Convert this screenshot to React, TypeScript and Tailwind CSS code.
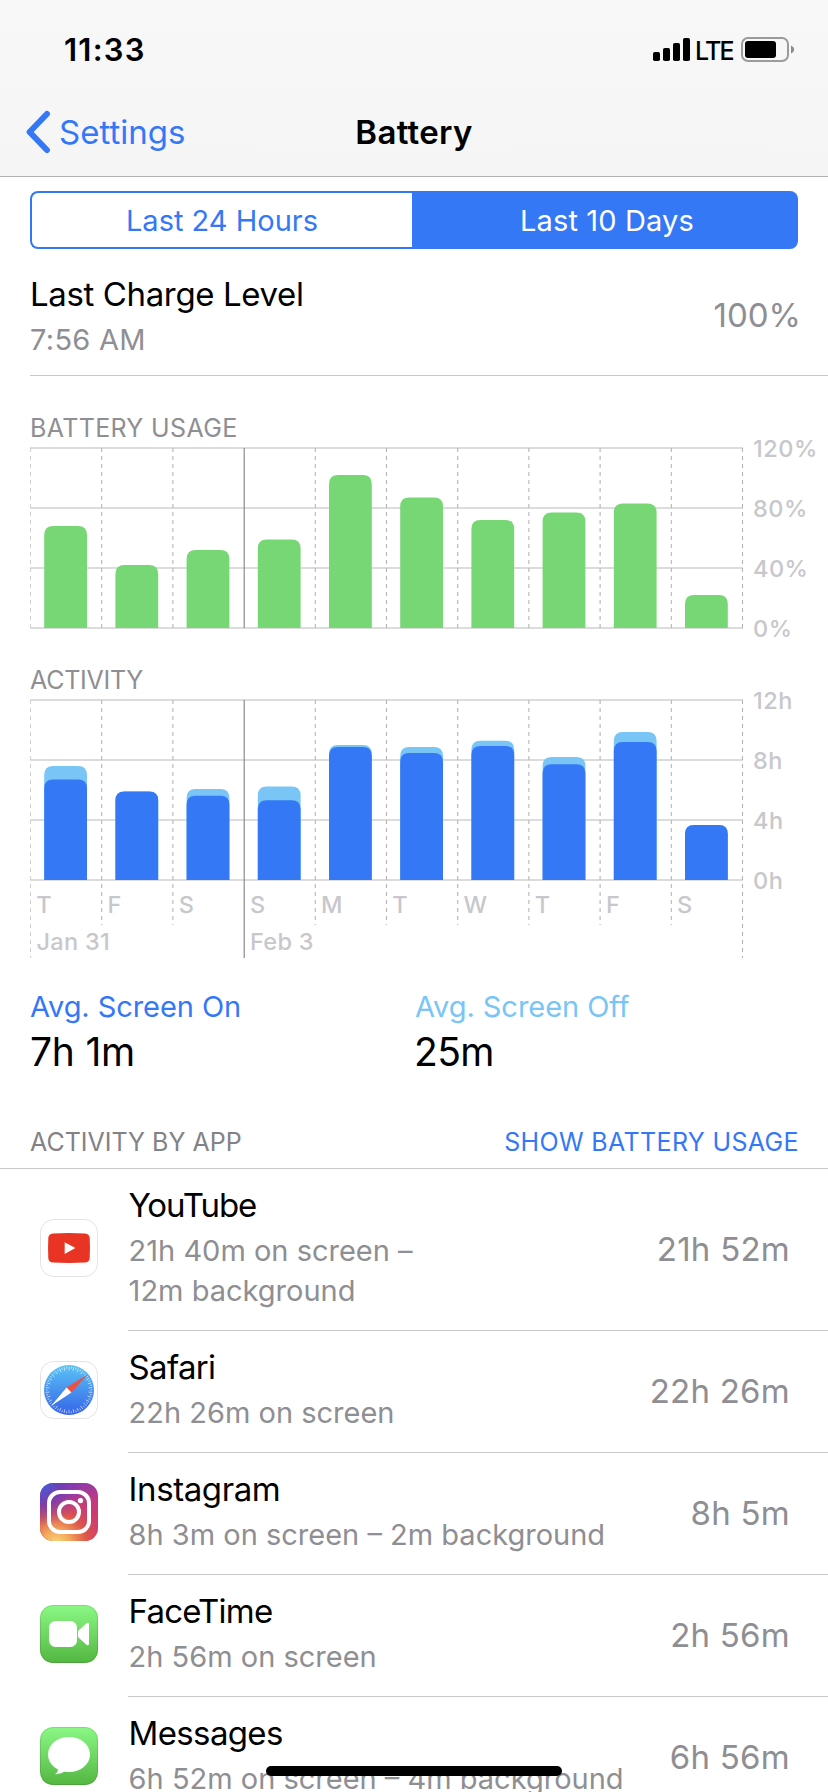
import type { ReactNode } from 'react'

const BAR_PITCH = 71.2
const CHART_HEIGHT = 180

const batteryUsage = [68, 42, 52, 59, 102, 87, 72, 77, 83, 22]

const activity = [
  { day: 'T', on: 6.7, total: 7.6 },
  { day: 'F', on: 5.9, total: 5.9 },
  { day: 'S', on: 5.62, total: 6.07 },
  { day: 'S', on: 5.32, total: 6.24 },
  { day: 'M', on: 8.87, total: 9.0 },
  { day: 'T', on: 8.47, total: 8.86 },
  { day: 'W', on: 8.93, total: 9.28 },
  { day: 'T', on: 7.71, total: 8.2 },
  { day: 'F', on: 9.2, total: 9.86 },
  { day: 'S', on: 3.66, total: 3.66 },
]

function YouTubeIcon() {
  return (
    <svg viewBox="0 0 58 58" className="w-[58px] h-[58px]">
      <rect x="0.5" y="0.5" width="57" height="57" rx="13" fill="#fff" stroke="#e3e3e3" />
      <path
        d="M13 14.4 Q29 13.6 45 14.4 Q49.4 14.7 49.7 19 Q50.2 29 49.7 39 Q49.4 43.3 45 43.6 Q29 44.5 13 43.6 Q8.6 43.3 8.3 39 Q7.8 29 8.3 19 Q8.6 14.7 13 14.4Z"
        fill="#e93323"
      />
      <path d="M24.7 23.2 L35.4 29.1 L24.7 35Z" fill="#fff" />
    </svg>
  )
}

function SafariIcon() {
  const ticks = Array.from({ length: 60 }, (_, i) => i * 6)
  return (
    <svg viewBox="0 0 58 58" className="w-[58px] h-[58px]">
      <defs>
        <linearGradient id="safari" x1="0" y1="0" x2="0" y2="1">
          <stop offset="0" stopColor="#5bc3f5" />
          <stop offset="1" stopColor="#3463e8" />
        </linearGradient>
      </defs>
      <rect x="0.5" y="0.5" width="57" height="57" rx="13" fill="#fff" stroke="#e3e3e3" />
      <circle cx="29" cy="29" r="25" fill="url(#safari)" />
      {ticks.map((deg, i) => (
        <line
          key={deg}
          x1="29"
          y1="5.6"
          x2="29"
          y2={i % 2 ? 7.6 : 9.4}
          stroke="#fff"
          strokeWidth="0.7"
          strokeOpacity="0.8"
          transform={`rotate(${deg} 29 29)`}
        />
      ))}
      <path d="M47.8 13.2 L31.4 31.4 L26.6 26.6Z" fill="#eb5042" />
      <path d="M11 45 L26.6 26.6 L31.4 31.4Z" fill="#fff" />
    </svg>
  )
}

function InstagramIcon() {
  return (
    <svg viewBox="0 0 58 58" className="w-[58px] h-[58px]">
      <defs>
        <linearGradient id="igBase" x1="0.35" y1="0" x2="0.65" y2="1">
          <stop offset="0" stopColor="#7f3bb5" />
          <stop offset="0.45" stopColor="#c23a7c" />
          <stop offset="1" stopColor="#d4405f" />
        </linearGradient>
        <radialGradient id="igWarm" cx="0.28" cy="1.05" r="0.95">
          <stop offset="0" stopColor="#fbd57c" />
          <stop offset="0.25" stopColor="#f2a95c" />
          <stop offset="0.55" stopColor="#e05a45" stopOpacity="0.9" />
          <stop offset="1" stopColor="#c83278" stopOpacity="0" />
        </radialGradient>
        <radialGradient id="igCool" cx="0" cy="0" r="0.75">
          <stop offset="0" stopColor="#3f64d8" />
          <stop offset="0.5" stopColor="#6a3db8" stopOpacity="0.75" />
          <stop offset="1" stopColor="#8a3ab9" stopOpacity="0" />
        </radialGradient>
      </defs>
      <rect width="58" height="58" rx="13" fill="url(#igBase)" />
      <rect width="58" height="58" rx="13" fill="url(#igWarm)" />
      <rect width="58" height="58" rx="13" fill="url(#igCool)" />
      <rect x="9" y="9" width="40" height="40" rx="11" fill="none" stroke="#fff" strokeWidth="4" />
      <circle cx="29" cy="29" r="10" fill="none" stroke="#fff" strokeWidth="4" />
      <circle cx="40.5" cy="17.6" r="2.7" fill="#fff" />
    </svg>
  )
}

function GreenTile({ id, children }: { id: string; children: ReactNode }) {
  return (
    <svg viewBox="0 0 58 58" className="w-[58px] h-[58px]">
      <defs>
        <linearGradient id={id} x1="0" y1="0" x2="0" y2="1">
          <stop offset="0" stopColor="#8bf885" />
          <stop offset="1" stopColor="#53b741" />
        </linearGradient>
      </defs>
      <rect width="58" height="58" rx="13" fill={`url(#${id})`} />
      <rect x="0.5" y="0.5" width="57" height="57" rx="12.5" fill="none" stroke="#000" strokeOpacity="0.1" />
      {children}
    </svg>
  )
}

function FaceTimeIcon() {
  return (
    <GreenTile id="facetime">
      <rect x="9" y="16" width="28" height="26" rx="6.5" fill="#fff" />
      <path
        d="M38 27 Q38 25.8 39 25 L46.5 18.3 Q49 16.6 49 19.5 V38.5 Q49 41.4 46.5 39.7 L39 33 Q38 32.2 38 31Z"
        fill="#fff"
      />
    </GreenTile>
  )
}

function MessagesIcon() {
  return (
    <GreenTile id="messages">
      <ellipse cx="29" cy="27.5" rx="21" ry="17.6" fill="#fff" />
      <path d="M18 41 Q18.6 44.8 15 47.2 Q20.6 47.8 25 44 L27 40Z" fill="#fff" />
    </GreenTile>
  )
}

const apps = [
  { name: 'YouTube', tracking: 'tracking-[-1.1px]', detail: '21h 40m on screen –\n12m background', time: '21h 52m', icon: YouTubeIcon },
  { name: 'Safari', tracking: 'tracking-[-0.7px]', detail: '22h 26m on screen', time: '22h 26m', icon: SafariIcon },
  { name: 'Instagram', tracking: 'tracking-[-0.4px]', detail: '8h 3m on screen – 2m background', time: '8h 5m', icon: InstagramIcon },
  { name: 'FaceTime', tracking: 'tracking-[-0.8px]', detail: '2h 56m on screen', time: '2h 56m', icon: FaceTimeIcon },
  { name: 'Messages', tracking: 'tracking-[-0.65px]', detail: '6h 52m on screen – 4m background', time: '6h 56m', icon: MessagesIcon },
]

// bar with only its top corners rounded
function barPath(index: number, height: number) {
  const x = 44.2 + index * BAR_PITCH
  const w = 42.8
  const top = 185 - height
  return `M${x} 185 V${top + 9} Q${x} ${top} ${x + 9} ${top} H${x + w - 9} Q${x + w} ${top} ${x + w} ${top + 9} V185Z`
}

function ChartGrid({ labels, dayEnd, dateEnd }: { labels: string[]; dayEnd: number; dateEnd: number }) {
  return (
    <g>
      {labels.map((label, i) => (
        <g key={label}>
          <rect x="30" y={4 + i * 60} width="713" height="2" fill="#dcdcdc" />
          <text x="753" y={13.5 + i * 60} className="text-[23.5px] font-medium tracking-[0.5px]" fill="#c7c7cc">
            {label}
          </text>
        </g>
      ))}
      {Array.from({ length: 11 }, (_, i) => {
        const x = 30.5 + i * BAR_PITCH
        if (i === 3) {
          return <line key={i} x1={x + 0.1} x2={x + 0.1} y1="5" y2={dateEnd} stroke="#8a8a8a" strokeWidth="1.2" />
        }
        return (
          <line
            key={i}
            x1={x}
            x2={x}
            y1="5"
            y2={i === 0 || i === 10 ? dateEnd : dayEnd}
            stroke={i === 0 ? '#d2d2d2' : '#b4b4b4'}
            strokeWidth="1.1"
            strokeDasharray="4 4"
          />
        )
      })}
    </g>
  )
}

function BatteryChart() {
  return (
    <svg width="828" height="222" viewBox="0 0 828 222" className="block overflow-visible">
      <ChartGrid labels={['120%', '80%', '40%', '0%']} dayEnd={185} dateEnd={185} />
      {batteryUsage.map((value, i) => (
        <path key={i} d={barPath(i, (value / 120) * CHART_HEIGHT)} fill="#77d774" />
      ))}
    </svg>
  )
}

function ActivityChart() {
  return (
    <svg width="828" height="292" viewBox="0 0 828 292" className="block overflow-visible">
      <ChartGrid labels={['12h', '8h', '4h', '0h']} dayEnd={230} dateEnd={263} />
      {activity.map(({ day, on, total }, i) => (
        <g key={i}>
          <path d={barPath(i, (total / 12) * CHART_HEIGHT)} fill="#78c5f6" />
          <path d={barPath(i, (on / 12) * CHART_HEIGHT)} fill="#3478f6" />
          <text x={36.3 + i * BAR_PITCH} y="218" className="text-[23.5px] font-medium" fill="#c7c7cc">
            {day}
          </text>
        </g>
      ))}
      <text x="36.5" y="255" className="text-[23.5px] font-medium tracking-[0.3px]" fill="#c7c7cc">
        Jan 31
      </text>
      <text x="250" y="255" className="text-[23.5px] font-medium tracking-[0.3px]" fill="#c7c7cc">
        Feb 3
      </text>
    </svg>
  )
}

function StatusBar() {
  return (
    <div className="h-[88px] pt-[12px] pl-[64px] pr-[33px] flex items-center justify-between">
      <span className="mt-px text-[31px] font-semibold tracking-[1.25px]">11:33</span>
      <div className="flex items-center">
        <svg width="38" height="24" viewBox="0 0 38 24">
          <rect x="0" y="14" width="7" height="9" rx="1.8" />
          <rect x="10" y="10" width="7" height="13" rx="1.8" />
          <rect x="20" y="5" width="7" height="18" rx="1.8" />
          <rect x="30" y="0" width="7" height="23" rx="1.8" />
        </svg>
        <span className="w-[50px] pl-[4px] mt-px text-[25px] leading-7 font-medium tracking-[-1.8px]">LTE</span>
        <svg width="54" height="26" viewBox="0 0 54 26">
          <rect x="1" y="1" width="46" height="23" rx="6" fill="none" stroke="#9b9b9b" strokeWidth="2" />
          <rect x="4" y="4" width="31" height="17" rx="3" />
          <path d="M50 8.5 Q53.2 10 53.2 12.5 Q53.2 15 50 16.5Z" fill="#8b8b8b" />
        </svg>
      </div>
    </div>
  )
}

export default function App() {
  return (
    <div className="relative w-[828px] h-[1792px] overflow-hidden bg-white text-black font-['Inter','Liberation_Sans',sans-serif]">
      {/* Header */}
      <header className="h-[177px] border-b border-[#b2b2b2] bg-linear-to-b from-[#f8f8f8] to-[#f5f5f5]">
        <StatusBar />
        <div className="h-[88px] grid grid-cols-[1fr_auto_1fr] items-center text-[33px] leading-[44px]">
          <div className="flex items-center pl-[24px] text-[#3478f6]">
            <svg width="35" height="46" viewBox="0 0 35 46" fill="none">
              <path
                d="M22.9 5 L5.6 23 L22.9 41"
                stroke="#3478f6"
                strokeWidth="6"
                strokeLinecap="round"
                strokeLinejoin="round"
              />
            </svg>
            Settings
          </div>
          <h1 className="font-semibold tracking-[0.3px]">Battery</h1>
        </div>
      </header>

      {/* Range switch */}
      <div className="mt-[14px] mx-[30px] h-[58px] flex text-[29px]">
        <button className="w-[382px] pt-[2px] rounded-l-lg border-2 border-r-0 border-[#3478f6] text-[#3478f6]">
          Last 24 Hours
        </button>
        <button className="flex-1 pt-[2px] pl-[4px] rounded-r-lg bg-[#3478f6] text-white tracking-[0.15px]">
          Last 10 Days
        </button>
      </div>

      {/* Last charge */}
      <div className="ml-[30px] pr-[27px] pt-[6px] h-[127px] border-b border-[#c8c7cc] flex items-center justify-between">
        <div className="pt-[3px]">
          <div className="text-[33px] leading-[45px] tracking-[-0.37px]">Last Charge Level</div>
          <div className="text-[29px] leading-[45px] tracking-[0.3px] text-[#8e8e93]">7:56 AM</div>
        </div>
        <span className="mt-[2px] text-[33px] text-[#8e8e93]">100%</span>
      </div>

      {/* Charts */}
      <h2 className="mt-[37px] ml-[30px] text-[25px] leading-[30px] tracking-[0.35px] text-[#8e8e93]">BATTERY USAGE</h2>
      <BatteryChart />
      <h2 className="ml-[30px] text-[25px] leading-[30px] tracking-[-0.25px] text-[#8e8e93]">ACTIVITY</h2>
      <ActivityChart />

      {/* Averages */}
      <div className="grid grid-cols-2 text-[29px] leading-10">
        <div className="pl-[30px]">
          <div className="text-[#3478f6] tracking-[-0.07px]">Avg. Screen On</div>
          <div className="text-[39px] leading-[50px] tracking-[-0.24px]">7h 1m</div>
        </div>
        <div className="pl-px">
          <div className="text-[#78c5f6] tracking-[-0.05px]">Avg. Screen Off</div>
          <div className="-ml-px text-[39px] leading-[50px] tracking-[-0.6px]">25m</div>
        </div>
      </div>

      {/* Apps */}
      <div className="mt-[50px] pb-[11px] pl-[30px] pr-[29px] flex justify-between border-b border-[#c8c7cc] text-[25px] leading-[30px]">
        <h2 className="text-[#828287]">ACTIVITY BY APP</h2>
        <button className="text-[#3478f6] tracking-[0.36px]">SHOW BATTERY USAGE</button>
      </div>
      <ul>
        {apps.map((app) => (
          <li key={app.name} className="flex items-stretch pl-10">
            <div className="w-[88px] flex items-center pb-1">
              <app.icon />
            </div>
            <div className="flex-1 flex items-center justify-between pt-[14px] pb-[19px] pl-[0.6px] pr-[38px] border-b border-[#c8c7cc]">
              <div>
                <div className={`text-[33px] leading-[44px] ${app.tracking}`}>{app.name}</div>
                <div className="mt-[4px] text-[29px] leading-10 whitespace-pre-line text-[#8e8e93]">{app.detail}</div>
              </div>
              <span className="mt-[5px] text-[33px] tracking-[0.25px] text-[#8e8e93]">{app.time}</span>
            </div>
          </li>
        ))}
      </ul>

      {/* Home indicator */}
      <div className="absolute left-[266px] top-[1766px] w-[296px] h-[10px] rounded-full bg-black" />
    </div>
  )
}
